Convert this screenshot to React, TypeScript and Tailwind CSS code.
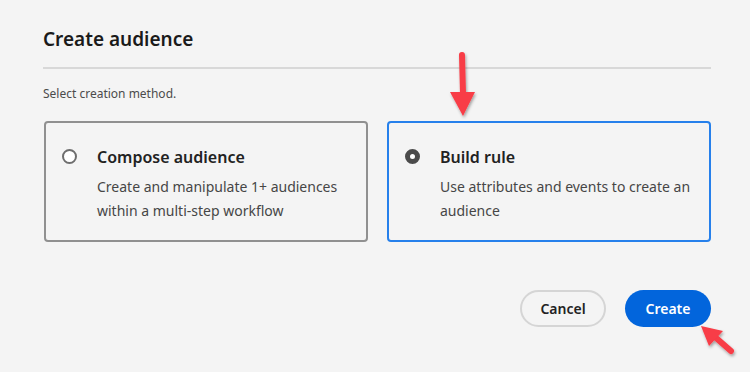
import React from 'react'

const font = { fontFamily: '"Noto Sans", "Open Sans", sans-serif' }

function Radio({ checked }: { checked?: boolean }) {
  return checked ? (
    <span className="block h-[15px] w-[15px] shrink-0 rounded-full border-[5px] border-[#4b4b4b] bg-white" />
  ) : (
    <span className="block h-[15px] w-[15px] shrink-0 rounded-full border-2 border-[#6e6e6e] bg-white" />
  )
}

function MethodCard({
  title,
  text,
  selected,
}: {
  title: string
  text: string
  selected?: boolean
}) {
  return (
    <div
      className={
        selected
          ? 'h-[121px] rounded-[4px] border-2 border-[#2680eb] pl-[16px] pr-3 pt-[23px]'
          : 'h-[121px] rounded-[4px] border-2 border-[#909090] pl-[16px] pr-3 pt-[23px]'
      }
    >
      <div className="flex gap-[20px]">
        <div className="pt-[3px]">
          <Radio checked={selected} />
        </div>
        <div>
          <div className="text-[16px] font-semibold leading-[22px] text-[#222]">{title}</div>
          <p className="mt-[7px] text-[14px] leading-[24px] text-[#464646]">{text}</p>
        </div>
      </div>
    </div>
  )
}

export default function App() {
  return (
    <div className="relative h-[372px] w-[750px] overflow-hidden bg-[#f4f4f4]" style={font}>
      <div className="ml-[43px] w-[668px] pt-[25px]">
        <h1 className="text-[19px] font-semibold leading-[28px] text-[#1a1a1a]">Create audience</h1>
        <div className="mt-[14px] h-[2px] bg-[#d8d8d8]" />
        <p className="mt-[16px] text-[12px] leading-[18px] text-[#4b4b4b]">Select creation method.</p>

        <div className="mt-[18px] grid grid-cols-2 gap-[19px] pl-[1px]">
          <MethodCard
            title="Compose audience"
            text="Create and manipulate 1+ audiences within a multi-step workflow"
          />
          <MethodCard title="Build rule" text="Use attributes and events to create an audience" selected />
        </div>

        <div className="mt-[48px] flex justify-end gap-[19px] pr-[-1px]">
          <button className="h-[37px] w-[86px] rounded-full border-2 border-[#d5d5d5] text-[14px] font-semibold text-[#222]">
            Cancel
          </button>
          <button className="h-[37px] w-[86px] rounded-full bg-[#0265dc] text-[14px] font-semibold text-white">
            Create
          </button>
        </div>
      </div>

      {/* annotation arrows */}
      <svg className="absolute left-[440px] top-[46px]" width="46" height="78" viewBox="0 0 46 78">
        <defs>
          <filter id="sh1" x="-50%" y="-50%" width="200%" height="200%">
            <feDropShadow dx="1" dy="2" stdDeviation="1.5" floodColor="#000" floodOpacity="0.35" />
          </filter>
        </defs>
        <g filter="url(#sh1)">
          <line x1="22" y1="9" x2="23" y2="48" stroke="#f83c46" strokeWidth="6" strokeLinecap="round" />
          <path d="M10 46 L35 46 L23 70 Z" fill="#f83c46" />
        </g>
      </svg>

      <svg className="absolute left-[694px] top-[318px]" width="50" height="46" viewBox="0 0 50 46">
        <defs>
          <filter id="sh2" x="-50%" y="-50%" width="200%" height="200%">
            <feDropShadow dx="1" dy="2" stdDeviation="1.5" floodColor="#000" floodOpacity="0.35" />
          </filter>
        </defs>
        <g filter="url(#sh2)">
          <line x1="21" y1="19" x2="37" y2="33" stroke="#f83c46" strokeWidth="6" strokeLinecap="round" />
          <path d="M7 8 L29 13 L15 28 Z" fill="#f83c46" />
        </g>
      </svg>
    </div>
  )
}
